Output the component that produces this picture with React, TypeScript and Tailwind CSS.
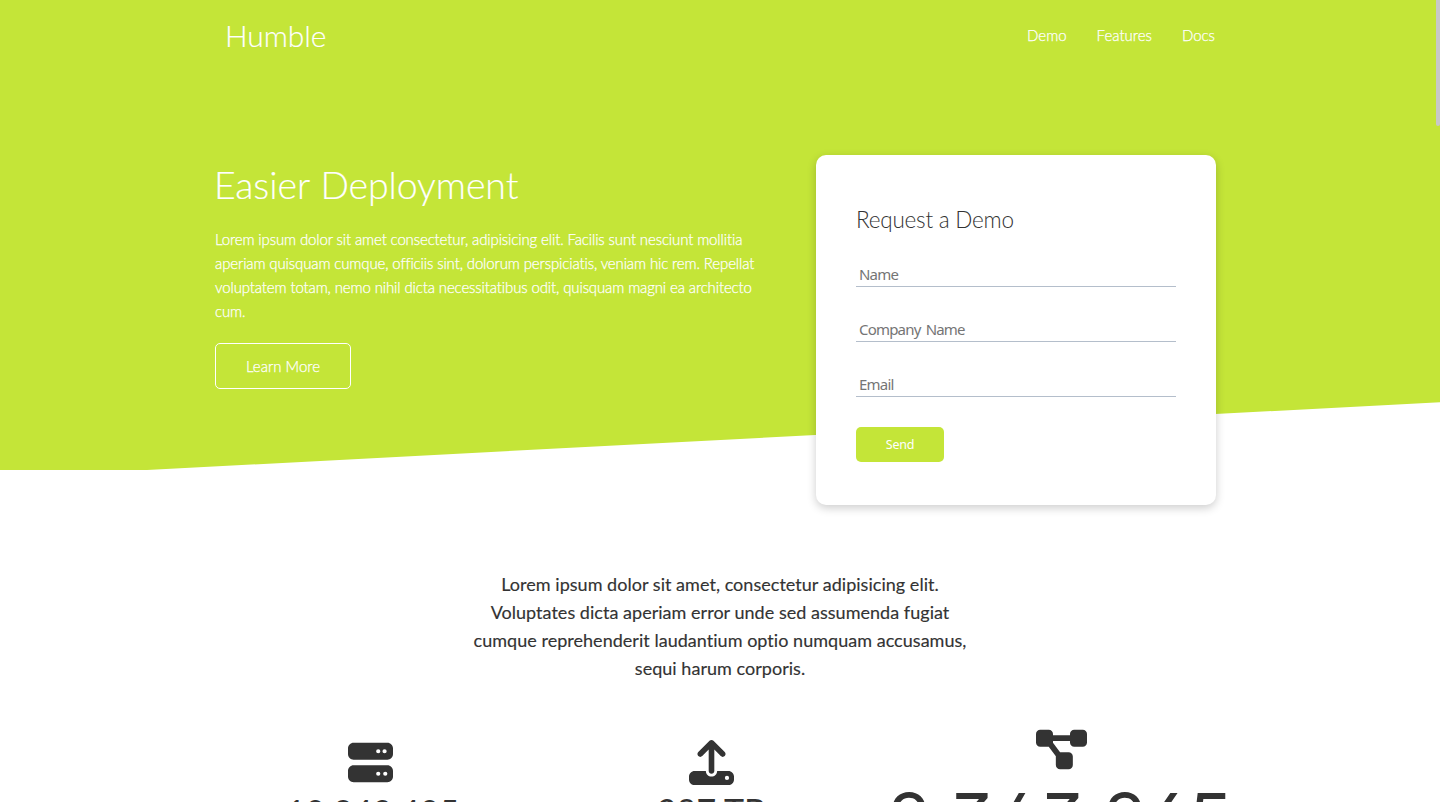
import { FaServer, FaUpload, FaDiagramProject } from "react-icons/fa6";

const links = ["Demo", "Features", "Docs"];
const fields = ["Name", "Company Name", "Email"];

export default function App() {
  return (
    <div className="relative h-[802px] overflow-hidden bg-white font-['Lato',sans-serif] text-[15px] text-[#333]">
      <header className="h-[70px] bg-[#c4e538] text-white">
        <nav className="mx-auto flex h-full w-[1010px] items-center justify-between pr-[10px] pl-[10px]">
          <h1 className="text-[30px] leading-[38px] font-light tracking-[-0.1px] [-webkit-text-stroke:0.15px_white]">Humble</h1>
          <ul className="flex gap-[30px] font-light [-webkit-text-stroke:0.25px_white]">
            {links.map((l) => (
              <li key={l}>{l}</li>
            ))}
          </ul>
        </nav>
      </header>

      <section className="relative h-[400px] bg-[#c4e538] text-white">
        <div className="absolute top-[370px] left-0 h-[100px] w-full -skew-y-3 bg-white" />
        <div className="relative mx-auto grid w-[1010px] grid-cols-[550px_400px] justify-between pr-[9px]">
          <div className="pt-[91px] font-light">
            <h2 className="-ml-px text-[37.5px] leading-[48px] tracking-[-0.09px] [word-spacing:1px] [-webkit-text-stroke:0.15px_white]">Easier Deployment</h2>
            <p className="mt-[18px] leading-6 tracking-[-0.13px] [-webkit-text-stroke:0.25px_white]">
              Lorem ipsum dolor sit amet consectetur, adipisicing elit. Facilis sunt nesciunt mollitia aperiam quisquam cumque, officiis sint, dolorum perspiciatis, veniam hic rem. Repellat voluptatem totam, nemo nihil dicta necessitatibus odit, quisquam magni ea architecto cum.
            </p>
            <a className="mt-[20px] flex h-[46px] w-[136px] items-center justify-center rounded-[5px] border border-white [-webkit-text-stroke:0.25px_white]">Learn More</a>
          </div>
          <form className="mt-[85px] h-[350px] rounded-[10px] bg-white px-10 pt-[50px] text-[#333] shadow-[0_3px_10px_rgba(0,0,0,0.2)]">
            <h2 className="text-[22.5px] leading-[29px] font-light tracking-[-0.22px]">Request a Demo</h2>
            <div className="mt-[28px] flex flex-col gap-[30px]">
              {fields.map((f) => (
                <input key={f} placeholder={f} className="h-[25px] w-full border-b border-[#b4becb] px-[3px] font-['Noto_Sans',sans-serif] text-[15px] tracking-[-0.8px] [word-spacing:2px] placeholder:text-[#757575]" />
              ))}
            </div>
            <button type="button" className="mt-[30px] h-[35px] w-[88px] rounded-[5px] bg-[#c4e538] pt-px font-['Noto_Sans',sans-serif] text-[12.5px] tracking-[-0.2px] text-white">Send</button>
          </form>
        </div>
      </section>

      <section className="mx-auto w-[1010px] pt-[100px]">
        <h3 className="mx-auto w-[500px] text-center text-[18px] leading-7 tracking-[0.03px] [-webkit-text-stroke:0.15px_#333]">
          Lorem ipsum dolor sit amet, consectetur adipisicing elit. Voluptates dicta aperiam error unde sed assumenda fugiat cumque reprehenderit laudantium optio numquam accusamus, sequi harum corporis.
        </h3>
        <div className="mt-[41px] flex">
          <div className="flex w-[311px] flex-col items-center pt-[17px]">
            <FaServer size={45} />
            <h3 className="mt-[5px] pl-[4px] text-[34px] leading-[44px] whitespace-nowrap">10,349,405</h3>
          </div>
          <div className="ml-[30px] flex w-[311px] flex-col items-center pt-[17px]">
            <FaUpload size={45} />
            <h3 className="mt-[4px] text-[34px] leading-[44px] whitespace-nowrap">987 TB</h3>
          </div>
          <div className="ml-[39px] flex w-[311px] flex-col items-center">
            <FaDiagramProject size={51} className="mt-px" />
            <h3 className="mt-[4px] pr-1 font-['Inter',sans-serif] text-[72px] leading-[80px] tracking-[-0.3px] whitespace-nowrap [font-feature-settings:'cv02','cv03','cv09']">2,343,265</h3>
          </div>
        </div>
      </section>

      <div className="absolute top-0 right-0 h-[126px] w-[4px] rounded-b-full bg-[#c8c8c8]" />
    </div>
  );
}
